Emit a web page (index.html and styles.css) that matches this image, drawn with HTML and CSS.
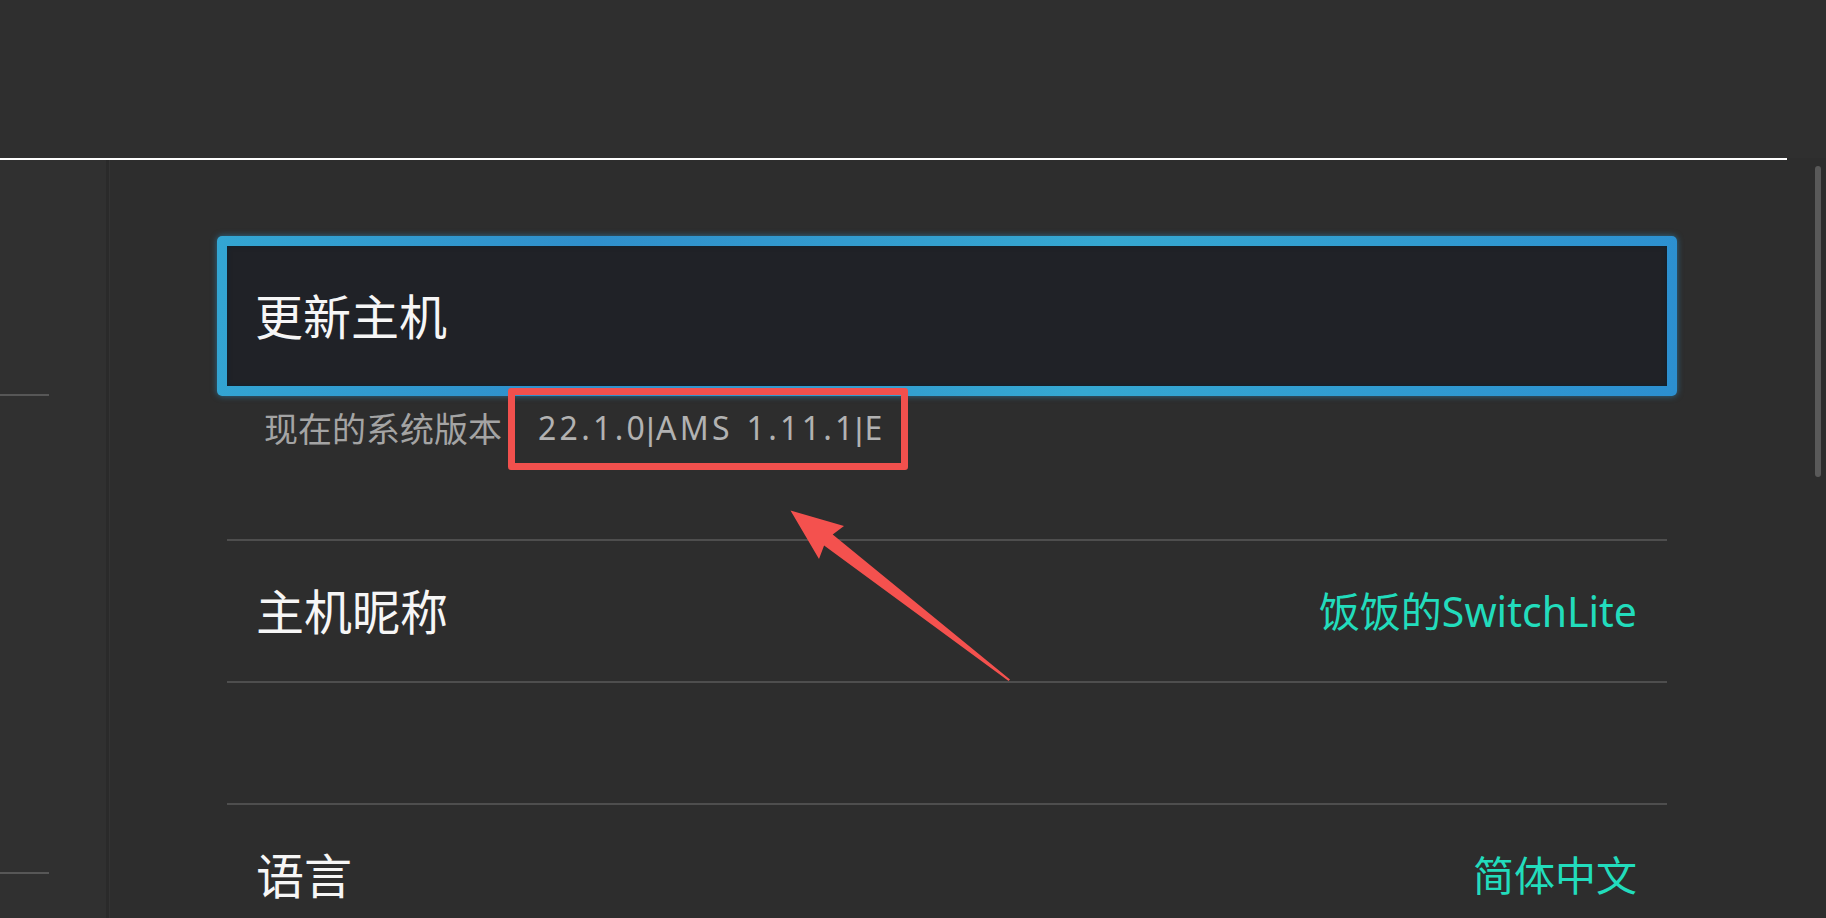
FILE: index.html
```html
<!DOCTYPE html>
<html lang="zh-CN">
<head>
<meta charset="utf-8">
<title>设置</title>
<link rel="stylesheet" href="styles.css">
</head>
<body>
<div class="screen">
  <header class="topbar"></header>
  <div class="topline"></div>
  <div class="body">
    <aside class="sidebar">
      <div class="side-sep first"></div>
      <div class="side-sep second"></div>
    </aside>
    <main class="content">
      <div class="selected">
        <div class="selected-inner">更新主机</div>
      </div>
      <div class="sysver">
        <span class="sysver-label">现在的系统版本</span>
        <span class="sysver-value">22.1.0<span class="pipe">|</span>AMS 1.11.1<span class="pipe">|</span>E</span>
      </div>
      <div class="list">
        <div class="row">
          <span class="row-label">主机昵称</span>
          <span class="row-value">饭饭的SwitchLite</span>
        </div>
        <div class="row row-empty"></div>
        <div class="row">
          <span class="row-label">语言</span>
          <span class="row-value">简体中文</span>
        </div>
      </div>
    </main>
  </div>
  <div class="scrollbar"></div>
  <div class="mark-box"></div>
  <svg class="mark-arrow" width="1826" height="918" viewBox="0 0 1826 918">
    <polygon points="790.5,510.5 844,526 832.7,534.4 1010,679.4 1008.6,680.9 824.1,545.4 819,559" fill="#f4514e"/>
  </svg>
</div>
</body>
</html>
```
FILE: styles.css
```css
html, body {
  margin: 0;
  padding: 0;
  background: #2d2d2d;
}
.screen {
  position: relative;
  width: 1826px;
  height: 918px;
  overflow: hidden;
  background: #2d2d2d;
  font-family: "Noto Sans", "Noto Sans CJK SC", sans-serif;
}
.topbar {
  height: 158px;
  background: #2f2f2f;
}
.topline {
  width: 1787px;
  height: 2px;
  background: #ffffff;
}
.body {
  display: flex;
  height: 758px;
}
.sidebar {
  width: 106px;
  flex: none;
  background: #303030;
  border-right: 3px solid #2a2a2a;
  box-shadow: 1px 0 0 #333333;
  display: flex;
  flex-direction: column;
}
.side-sep {
  width: 49px;
  height: 2px;
  background: #575757;
}
.side-sep.first {
  margin-top: 234px;
}
.side-sep.second {
  margin-top: 476px;
}
.content {
  flex: 1;
  padding: 76px 0 0 108px;
}
.selected {
  width: 1440px;
  height: 140px;
  padding: 10px;
  border-radius: 5px;
  background: linear-gradient(100deg, #33a6d3 0%, #2f8fcc 25%, #35a8d2 60%, #2c8fd0 100%);
  box-shadow: 0 0 6px rgba(45, 160, 220, 0.55);
}
.selected-inner {
  height: 100%;
  box-sizing: border-box;
  background: #202227;
  box-shadow: inset 0 0 5px #0d2231;
  display: flex;
  align-items: center;
  padding-left: 28px;
  padding-bottom: 4px;
  color: #f6f6f6;
  font-size: 48px;
}
.sysver {
  display: flex;
  align-items: center;
  height: 40px;
  margin-top: 11px;
  padding-left: 47px;
}
.sysver-label {
  color: #a4a4a4;
  font-size: 34px;
}
.sysver-value {
  margin-left: 36px;
  color: #b2b2b2;
  font-size: 32px;
  letter-spacing: 3.3px;
  word-spacing: 2px;
}
.pipe {
  font-family: "Liberation Sans", sans-serif;
  letter-spacing: 1.5px;
  margin-left: -2px;
}
.list {
  margin: 92px 0 0 10px;
  width: 1440px;
}
.row {
  height: 142px;
  box-sizing: border-box;
  border-top: 2px solid #4e4e4e;
  display: flex;
  align-items: center;
  justify-content: space-between;
  padding: 0 30px 4px 29px;
}
.row-empty {
  height: 122px;
}
.row-label {
  color: #f6f6f6;
  font-size: 48px;
}
.row-value {
  color: #22dcbc;
  font-size: 41px;
}
.scrollbar {
  position: absolute;
  left: 1815px;
  top: 166px;
  width: 6px;
  height: 311px;
  border-radius: 3px;
  background: #595959;
}
.mark-box {
  position: absolute;
  left: 508px;
  top: 388px;
  width: 386px;
  height: 68px;
  border: 7px solid #f1504d;
  border-radius: 3px;
}
.mark-arrow {
  position: absolute;
  left: 0;
  top: 0;
  pointer-events: none;
}
```
